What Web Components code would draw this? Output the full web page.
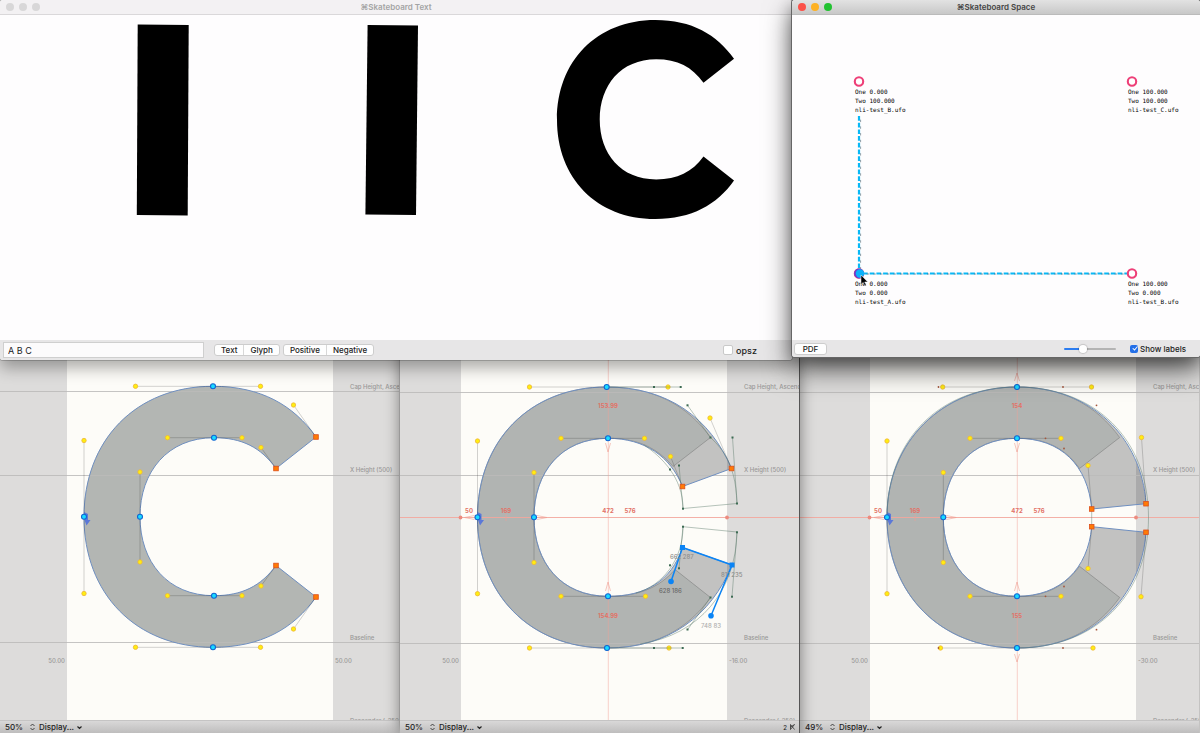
<!DOCTYPE html>
<html lang="en">
<head>
<meta charset="utf-8">
<meta name="viewport" content="width=device-width, initial-scale=1">
<title>Skateboard</title>
<style>
  html, body { height: 100%; }
  body { margin: 0; background: #dddcdb; font-family: Inter, "DejaVu Sans", sans-serif; font-size: 8px; color: #222; overflow: hidden; }
</style>
</head>
<body>
<skate-desktop>
  <glyph-editor slot="editor" glyph="one" zoom="50%"></glyph-editor>
  <glyph-editor slot="editor" glyph="two" zoom="50%" selected="2" class="front"></glyph-editor>
  <glyph-editor slot="editor" glyph="three" zoom="49%"></glyph-editor>
  <app-window slot="window" heading="⌘Skateboard Text" class="text-window">
    <text-preview></text-preview>
    <text-toolbar slot="toolbar"></text-toolbar>
  </app-window>
  <app-window slot="window" heading="⌘Skateboard Space" active class="space-window">
    <space-map></space-map>
    <space-toolbar slot="toolbar"></space-toolbar>
  </app-window>
</skate-desktop>

<script>
const define = (name, html, setup) => customElements.define(name, class extends HTMLElement {
  constructor() {
    super();
    this.attachShadow({ mode: 'open' });
  }
  connectedCallback() {
    this.shadowRoot.innerHTML = typeof html === 'function' ? html(this) : html;
    if (setup) setup(this);
  }
});

/* Desktop: editors fill the back, floating windows share the first row */
define('skate-desktop', `
  <style>
    :host { display: grid; grid-template: auto 1fr / 100%; height: 100%; }
    .editors { grid-area: 1 / 1 / 3 / 2; display: grid; grid-template-columns: repeat(3, 1fr); isolation: isolate; min-height: 0; }
    .windows { grid-area: 1 / 1; display: grid; grid-template-columns: 66fr 34fr; align-items: start; z-index: 1; }
    ::slotted(.front) { z-index: 1; box-shadow: 0 0 14px rgba(0,0,0,.45); }
    ::slotted(.space-window) { z-index: 1; box-shadow: 0 0 0 1px #666, 0 12px 28px rgba(0,0,0,.6), 0 6px 16px rgba(0,0,0,.3); }
    ::slotted(.text-window) { box-shadow: 0 0 0 1px rgba(0,0,0,.18), 0 8px 16px rgba(0,0,0,.32); }
  </style>
  <main class="editors"><slot name="editor"></slot></main>
  <section class="windows"><slot name="window"></slot></section>
`);

define('app-window', el => `
  <style>
    :host { display: block; position: relative; border-radius: 3px; background: #fefdfe; }
    header { display: grid; grid-template-columns: 1fr auto 1fr; align-items: center; height: 14px; padding: 0 6px; border-bottom: 1px solid #dad8da; border-radius: 3px 3px 0 0; background: #f3f1f3; color: #a4a4a4; }
    :host([active]) header { background: linear-gradient(#e2e2e2, #c8c8c8); color: #444; border-color: #bbb; }
    h1 { margin: 0; font-size: 8px; font-weight: 600; line-height: 14px; }
    .lights { display: flex; gap: 5px; }
    .lights button { width: 8px; height: 8px; padding: 0; border: 0; border-radius: 50%; background: #d8d7d8; }
    :host([active]) .close { background: #fb5149; }
    :host([active]) .min { background: #fdb124; }
    :host([active]) .max { background: #22c231; }
  </style>
  <header>
    <div class="lights">
      <button class="close" aria-label="Close"></button><button class="min" aria-label="Minimise"></button><button class="max" aria-label="Zoom"></button>
    </div>
    <h1>${el.getAttribute('heading')}</h1>
  </header>
  <slot></slot>
  <slot name="toolbar"></slot>
`);

define('text-preview', `
  <style>:host { display: block; } svg { display: block; width: 100%; height: auto; }</style>
  <svg viewBox="0 15 792 325" role="img" aria-label="Preview">
    <path d="M137.7 24.6L188.7 25L187.7 215.4L136.8 215Z"/>
    <path d="M367.6 25L418 25.6L416 215L365.4 214.4Z"/>
    <path transform="translate(557 20) scale(.763 .761) translate(-84 -386)" d="M84 517C84 440.5 135.5 386 213 386C260.5 386 293.5 405 316 437L276 468.5C261 447.5 242 437.5 214 437.5C167.5 437.5 140 472 140 516.5C140 562 167.5 595.5 214 595.5C242 595.5 261 586 276 565.5L316 597C293.5 629 260.5 647.5 213 647.5C135.5 647.5 84 593.5 84 517Z"/>
  </svg>
`);

define('text-toolbar', `
  <style>
    :host { display: flex; align-items: center; box-sizing: border-box; height: 20px; padding: 0 35px 0 3px; border-radius: 0 0 3px 3px; background: #e7e6e7; gap: 3px; }
    input, button { font: inherit; color: #222; }
    input[type=text] { box-sizing: border-box; width: 201px; height: 16px; margin: 0 7px 0 0; padding: 0 4px; border: 1px solid #cfcfcf; background: #fcfbfc; font-size: 9px; }
    .group { display: flex; height: 12px; background: #fefefe; border: 1px solid #cdcdcd; box-sizing: border-box; border-radius: 3px; }
    button { border: 0; padding: 0 6px; background: none; line-height: 10px; font-weight: 500; white-space: nowrap; }
    button + button { border-left: 1px solid #d8d8d8; }
    label { display: flex; align-items: center; gap: 3px; margin-left: auto; font-size: 9px; font-weight: 500; }
    input[type=checkbox] { appearance: none; width: 10px; height: 10px; margin: 0; border: 1px solid #c9c9c9; border-radius: 2px; background: #fff; box-sizing: border-box; }
  </style>
  <input type="text" value="A B C" aria-label="Preview text">
  <div class="group"><button>Text</button><button>Glyph</button></div>
  <div class="group"><button>Positive</button><button>Negative</button></div>
  <label><input type="checkbox">opsz</label>
`);

define('space-toolbar', `
  <style>
    :host { display: flex; align-items: center; box-sizing: border-box; height: 17px; padding: 0 14px 0 2px; border-radius: 0 0 3px 3px; background: #e7e6e7; }
    button { font: inherit; font-weight: 500; color: #222; box-sizing: border-box; height: 12px; width: 33px; padding: 0; line-height: 10px; border: 1px solid #cdcdcd; border-radius: 3px; background: #fefefe; }
    input { appearance: none; margin: 0; }
    input[type=range] { width: 52px; height: 8px; margin-left: auto; background: none; }
    input[type=range]::-webkit-slider-runnable-track { height: 2px; border-radius: 1px; background: linear-gradient(90deg, #2b7cf0 36%, #b4b4b4 36%); }
    input[type=range]::-webkit-slider-thumb { appearance: none; width: 8px; height: 8px; margin-top: -3px; border-radius: 50%; background: #fff; box-shadow: 0 0 1px 1px rgba(0,0,0,.15); }
    label { display: flex; align-items: center; gap: 2px; margin-left: 14px; font-weight: 500; white-space: nowrap; }
    input[type=checkbox] { display: grid; place-items: center; width: 8px; height: 8px; border-radius: 2px; background: #2470e8; }
    input[type=checkbox]::before { content: ""; width: 2px; height: 4px; border: solid #fff; border-width: 0 1px 1px 0; transform: rotate(40deg) translateY(-1px); }
  </style>
  <button>PDF</button>
  <input type="range" min="0" max="100" value="33" aria-label="Scale">
  <label><input type="checkbox" checked>Show labels</label>
`);

/* Design space with the four masters */
define('space-map', () => {
  const nodes = [
    [67, 66.5, 'One 0.000', 'Two 100.000', 'nli-test_B.ufo'],
    [340, 66.5, 'One 100.000', 'Two 100.000', 'nli-test_C.ufo'],
    [67, 258.5, 'One 0.000', 'Two 0.000', 'nli-test_A.ufo'],
    [340, 258.5, 'One 100.000', 'Two 0.000', 'nli-test_B.ufo']
  ];
  return `
  <style>
    :host { display: block; }
    svg { display: block; width: 100%; height: auto; }
    text { font: 6px "DejaVu Sans Mono", monospace; fill: #000; }
    .dash { stroke: #08b8f6; stroke-width: 2.2; stroke-dasharray: 4.7 2; }
    .thin { stroke: #45606c; stroke-width: .6; stroke-dasharray: 2.4 4.3; stroke-dashoffset: 3; }
    .master { fill: #fff; stroke: #ee3f78; stroke-width: 2.1; }
  </style>
  <svg viewBox="0 0 408 325" role="img" aria-label="Design space">
    <path class="dash" d="M67 101V254M71 258.5H336"/>
    <path class="thin" d="M68.6 101V254M71 259H336"/>
    ${nodes.map(n => `<circle class="master" cx="${n[0]}" cy="${n[1]}" r="4.2"/>` +
      n.slice(2).map((t, i) => `<text x="${n[0] - 4}" y="${n[1] + 12.5 + i * 9}">${t}</text>`).join('')).join('')}
    <circle cx="67" cy="258.5" r="4.9" fill="#6a3fd0"/>
    <circle cx="68" cy="258.5" r="4.2" fill="#0cb2fa"/>
    <path d="M69 260V269.500L71.200 267.500L72.800 271L74.300 270.300L72.700 267H75.800Z" fill="#000" stroke="#fff" stroke-width=".5"/>
  </svg>`;
});

/* Glyph outlines and their control points, per editor */
const glyphs = {
  one: {
    left: 67, right: 333, cap: 391.5, base: 642.5, rsb: '50.00',
    path: 'M84 517C84 440.5 135.500 386.300 213 386.300C260.500 386.300 293.500 405 316 437L276 468.500C261 447.500 242 437.700 214 437.700C167.500 437.700 140 472 140 516.500C140 562 167.500 595.700 214 595.700C242 595.700 261 586 276 565.500L316 597C293.500 629 260.500 647.300 213 647.300C135.500 647.300 84 593.500 84 517Z',
    handles: [[84,517,84,440.5],[84,517,84,593.5],[213,386.3,135.5,386.3],[213,386.3,260.5,386.3],[316,437,293.5,405],[276,468.5,261,447.5],[214,437.7,167.5,437.7],[214,437.7,242,437.7],[140,516.5,140,472],[140,516.5,140,562],[214,595.7,167.5,595.7],[214,595.7,242,595.7],[276,565.5,261,586],[316,597,293.5,629],[213,647.3,135.5,647.3],[213,647.3,260.5,647.3]],
    smooth: [[84,516.7],[213,386.3],[214,437.7],[140,516.7],[214,595.7],[213,647.3]],
    corner: [[316,437],[276,468.5],[276,565.5],[316,597]]
  },
  two: {
    left: 61, right: 327, cap: 392.5, base: 643.5, rsb: '-16.00', axis: 208.3, cx: 208, stems: ['153.99', '154.99'],
    path: 'M77.500 517.300C77.500 441 129.500 387 206.500 387C268 387 310 418 331.500 468.500L282.500 486.500C270.500 456.500 244.500 438.300 208 438.300C161 438.300 134 472.500 134 517.300C134 562.500 161 596.300 208 596.300C245.500 596.300 271 581.500 282.500 547.500L332 565C311 615.700 269 648 207 648C129.500 648 77.500 593.700 77.500 517.300Z',
    core: 'M77.500 517.300C77.500 441 129.500 387 206.500 387C254 387 287.500 405.300 310.500 437.500L273 466.500C257 448 238 438.300 208 438.300C161 438.300 134 472.500 134 517.300C134 562.500 161 596.300 208 596.300C238 596.300 259 588 275 569.500L310.500 597.500C287.500 629.700 254 648 207 648C129.500 648 77.500 593.700 77.500 517.300Z',
    handles: [[77.5,517.3,77.5,441],[77.5,517.3,77.5,593.7],[206.5,387,129.5,387],[206.5,387,268,387],[331.5,468.5,310,418],[282.5,486.5,270.5,456.5],[208,438.3,161,438.3],[208,438.3,244.5,438.3],[134,517.3,134,472.5],[134,517.3,134,562.5],[208,596.3,161,596.3],[208,596.3,245.5,596.3],[207,648,129.5,648],[207,648,269,648]],
    smooth: [[77.5,517.3],[206.7,387],[208,438.3],[134,517.3],[208,596.3],[207,648]],
    corner: [[331.5,468.5],[282.5,486.5]],
    extra: `
      <path class="ghost" d="M206.500 387H280.700M207 648H282.700M244 445C262 457 283 478 283 508.500L337 503.500C336 460 318 445 310.500 437.500L287.500 405.300M332.500 437.500L337 503.500M279 465.500L283 508.500M283 526.700L337 532L332 596.700M283 526.700L279 568M283 526.700C283 560 262 586 236 593M337 532C336 590 300 635 240 644M310.500 597.500L287.500 629.700"/>
      ${[[254,387],[280.7,387],[287.5,405.3],[310.5,437.5],[270,469.5],[279,465.5],[332.5,437.5],[337,503.5],[283,508.7],[283,526.7],[337,532.3],[332,596.7],[279,568.3],[270,565.3],[310.5,597.5],[287.5,629.5],[254,648],[282.7,648]].map(p => `<rect x="${p[0]-1}" y="${p[1]-1}" width="2" height="2" fill="#3d6b53"/>`).join('')}
      <path d="M271 581.500L282.500 547.500L332 565L311 615.700" fill="none" stroke="#0b84f5" stroke-width="1.500"/>
      <g fill="#0b84f5"><circle cx="271" cy="581.500" r="2.800"/><circle cx="311" cy="615.700" r="2.800"/><rect x="280" y="545" width="5" height="5"/><rect x="329.500" y="562.500" width="5" height="5"/></g>
      <g class="value"><text x="270" y="559">662 287</text><text x="321" y="577">811 235</text><text x="301" y="628" class="pale">748 83</text></g>
      <text class="strong" x="259" y="593">628 186</text>`
  },
  three: {
    left: 70, right: 336, cap: 392.5, base: 643.5, rsb: '-30.00', axis: 217.3, cx: 217, stems: ['154', '155'],
    path: 'M87 517.300C87 441 142.700 387 217 387C291.500 387 341.500 437.500 346 503.700L291.700 509C288 465.500 261 438.300 217 438.300C170 438.300 143.300 472.500 143.300 517.300C143.300 562.500 170 596.300 217 596.300C261 596.300 288 568.500 291.700 526.700L346 532.300C341 596.700 293 648 217 648C140.500 648 87 593.700 87 517.300Z',
    core: 'M87 517.300C87 441 142.700 387 217 387C263 387 296.500 405.300 319.700 437.500L279.500 468.500C265 448 245.500 438.300 217 438.300C170 438.300 143.300 472.500 143.300 517.300C143.300 562.500 170 596.300 217 596.300C245.500 596.300 264 587 279.500 566.300L319.700 597.500C296.500 629.700 263 648 217 648C140.500 648 87 593.700 87 517.300Z',
    handles: [[87,517.3,87,441],[87,517.3,87,593.7],[217,387,142.7,387],[217,387,291.5,387],[346,503.7,341.5,437.5],[291.7,509,288,465.5],[217,438.3,170,438.3],[217,438.3,261,438.3],[143.3,517.3,143.3,472.5],[143.3,517.3,143.3,562.5],[217,596.3,170,596.3],[217,596.3,261,596.3],[291.7,526.7,288,568.5],[346,532.3,341,596.7],[217,648,140.5,648],[217,648,293,648]],
    smooth: [[87,517.3],[217,387],[217,438.3],[143.3,517.3],[217,596.3],[217,648]],
    corner: [[346,503.7],[291.7,509],[291.7,526.7],[346,532.3]],
    extra: `
      <path class="ghost" d="M87 517.300C87 441 138.500 387 217 387C296 387 348.500 440 348.500 517.500C348.500 595 296 648 217 648M291.700 509V526.700"/>
      <path class="flare" d="M214.500 381L217 373L219.500 381M214.500 654L217 662L219.500 654"/>
      ${[[138.5,387],[263,387],[296.5,405.3],[245.5,438.3],[264,448.5],[138.5,648],[263,648],[296.5,629.7],[245.5,596.3],[264,586.5]].map(p => `<circle cx="${p[0]}" cy="${p[1]}" r=".9" fill="#a5563c"/>`).join('')}`
  }
};

define('glyph-editor', el => {
  const g = glyphs[el.getAttribute('glyph')];
  const start = g.smooth[0], inner = g.smooth[3];
  const measure = g.axis ? `
    <g class="measure">
      <path d="M0 517.500H400"/>
      <path class="dim" d="M${g.axis} 0V720"/>
      <path class="flare" d="M${g.cx - 2.5} 443L${g.cx} 452L${g.cx + 2.5} 443M${g.cx - 2.5} 591L${g.cx} 582L${g.cx + 2.5} 591M${inner[0] + 3} 515.500L${inner[0] + 13} 517.500L${inner[0] + 3} 519.500M${start[0] - 3} 515.500L${start[0] - 13} 517.500L${start[0] - 3} 519.500M${g.left + 45} 514V521"/>
      <circle cx="${g.left - .5}" cy="517.500" r="1.900"/><circle cx="${g.right}" cy="517.500" r="1.900"/>
      <text x="${g.left + 8}" y="513">50</text><text x="${g.left + 45}" y="513">169</text>
      <text x="${g.cx}" y="513">472</text><text x="${g.cx + 22}" y="513">576</text>
      <text x="${g.cx}" y="408">${g.stems[0]}</text><text x="${g.cx}" y="618">${g.stems[1]}</text>
    </g>` : '';
  const labelX = g.right + 17;
  const marked = el.getAttribute('selected');
  return `
  <style>
    :host { display: flex; flex-direction: column; min-width: 0; min-height: 0; box-sizing: border-box; background: #dddcdb; border-right: 1px solid #c4c3c2; }
    :host(.front) { border-right-color: #555; }
    svg { display: block; }
    .canvas { flex: 1 1 0; min-height: 0; width: 100%; }
    text { font: 500 6px Inter, sans-serif; fill: #999897; }
    .line { stroke: #bcbbba; stroke-width: 1; }
    .outline { fill: none; stroke: #6f8fc0; stroke-width: 1; }
    .handle { stroke: #000; stroke-opacity: .25; stroke-width: .7; }
    .off { fill: #ffee10; stroke: #edb53a; stroke-width: .8; }
    .on { fill: #19dbff; stroke: #1166d2; stroke-width: 1.1; }
    .corner { fill: #ff7b05; stroke: #dc4f1c; stroke-width: .8; }
    .ghost { fill: none; stroke: #5c7a6c; stroke-width: .6; opacity: .75; }
    .measure path { fill: none; stroke: #f3a79d; stroke-width: .9; }
    .measure .dim { stroke: #f0a094; stroke-width: .6; opacity: .8; }
    .measure .flare, .flare { fill: none; stroke: #f0a094; stroke-width: .6; }
    .measure circle { fill: #ec8b7f; }
    .measure text { fill: #e27267; text-anchor: middle; font-weight: 700; }
    .value text { fill: #8c8c8b; }
    .value .pale { fill: #aeaead; }
    .strong { fill: #666; }
    footer { display: flex; align-items: center; flex: none; box-sizing: border-box; height: 13px; padding: 0 4px 0 5px; border-top: 1px solid #c5c4c4; background: linear-gradient(#d9d8d8, #bebdbd); gap: 4px; }
    label { display: flex; align-items: center; gap: 2px; }
    select { appearance: none; font: inherit; font-weight: 500; color: #222; border: 0; padding: 0; margin: 0; background: none; }
    .zoom { gap: 6px; }
    .count { display: flex; align-items: center; gap: 3px; margin-left: auto; font-size: 6px; font-weight: 500; }
    footer path { fill: none; stroke: #222; stroke-width: 1; }
  </style>
  <svg class="canvas" viewBox="0 0 400 720" preserveAspectRatio="xMinYMax slice" role="img" aria-label="Glyph outline">
    <rect x="${g.left}" width="${g.right - g.left}" height="720" fill="#fdfcf8"/>
    ${g.core
      ? `<path d="${g.path}" fill="rgb(0,4,14)" fill-opacity=".23"/><path d="${g.core}" fill="rgb(30,60,50)" fill-opacity=".1" stroke="#555" stroke-opacity=".5" stroke-width=".7"/>`
      : `<path d="${g.path}" fill="#b3b6b3"/>`}
    <path class="line" d="M0 ${g.cap}H400M0 475.500H400M0 ${g.base}H400" opacity=".85"/>
    ${measure}
    <path class="outline" d="${g.path}"/>
    <path d="M${start[0]} 512L${start[0] + 4} 514V520L${start[0] + 6.5} 520L${start[0] + 2.5} 525.500L${start[0] + .5} 520Z" fill="#5b78d8"/>
    ${g.handles.map(h => `<path class="handle" d="M${h[0]} ${h[1]}L${h[2]} ${h[3]}"/>`).join('')}
    ${g.handles.map(h => `<circle class="off" cx="${h[2]}" cy="${h[3]}" r="2.200"/>`).join('')}
    ${g.extra || ''}
    ${g.smooth.map(p => `<circle class="on" cx="${p[0]}" cy="${p[1]}" r="2.500"/>`).join('')}
    ${g.corner.map(p => `<rect class="corner" x="${p[0] - 2.3}" y="${p[1] - 2.3}" width="4.600" height="4.600"/>`).join('')}
    <text x="${labelX}" y="389">Cap Height, Ascender (750)</text>
    <text x="${labelX}" y="472">X Height (500)</text>
    <text x="${labelX}" y="640">Baseline</text>
    <text x="${labelX}" y="723">Descender (-250)</text>
    <text x="${g.left - 2}" y="663" text-anchor="end">50.00</text>
    <text x="${g.right + 2}" y="663">${g.rsb}</text>
  </svg>
  <footer>
    <label class="zoom"><select aria-label="Zoom"><option>${el.getAttribute('zoom')}</option></select><svg width="5" height="8" viewBox="0 0 5 8"><path d="M.5 3L2.500 1L4.500 3M.5 5L2.500 7L4.500 5" style="stroke-width:.8"/></svg></label>
    <label><select aria-label="Display options"><option>Display...</option></select><svg width="5" height="5" viewBox="0 0 5 5"><path d="M.5 1.500L2.500 3.500L4.500 1.500" style="stroke-width:1.200"/></svg></label>
    ${marked ? `<span class="count">${marked}<svg width="5" height="6" viewBox="0 0 5 6"><path d="M.5 .5V5.500M.5 3L4.500 .5M.5 .5L4.500 5.500M.5 5.500L4.500 .5" style="stroke-width:.7"/></svg></span>` : ''}
  </footer>`;
});
</script>
</body>
</html>
